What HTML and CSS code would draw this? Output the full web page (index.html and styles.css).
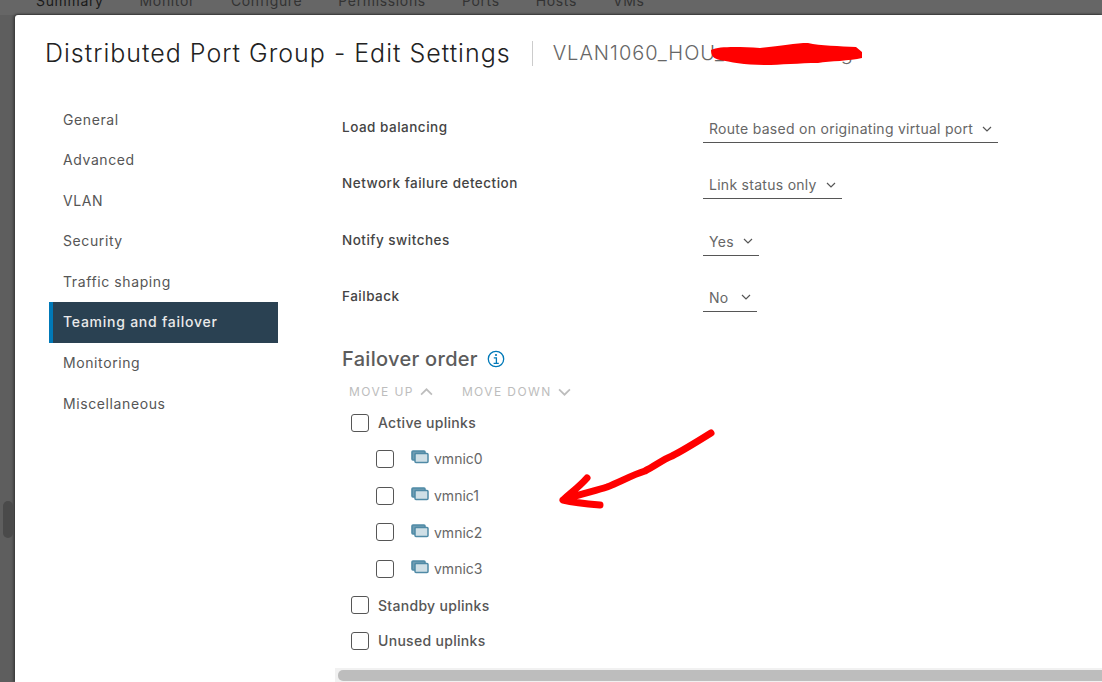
FILE: index.html
```html
<!DOCTYPE html>
<html lang="en">
<head>
<meta charset="utf-8">
<title>Distributed Port Group - Edit Settings</title>
<link rel="stylesheet" href="styles.css">
</head>
<body>
<nav class="tabs">
  <span class="tab tab-current">Summary</span><span class="tab">Monitor</span><span class="tab">Configure</span><span class="tab">Permissions</span><span class="tab">Ports</span><span class="tab">Hosts</span><span class="tab">VMs</span>
</nav>
<div class="backdrop-thumb"></div>
<main class="modal">
  <header class="modal-head">
    <h1 class="modal-title">Distributed Port Group - Edit Settings</h1>
    <span class="modal-sub">VLAN1060_HOU_xxxxxxxxxxg</span>
  </header>
  <div class="modal-body">
    <ul class="side">
      <li>General</li>
      <li>Advanced</li>
      <li>VLAN</li>
      <li>Security</li>
      <li>Traffic shaping</li>
      <li class="active">Teaming and failover</li>
      <li>Monitoring</li>
      <li>Miscellaneous</li>
    </ul>
    <section class="pane">
      <div class="form">
        <div class="row"><label class="lbl">Load balancing</label><span class="select">Route based on originating virtual port<svg class="caret" viewBox="0 0 10 6"><path d="M1 1l4 4 4-4"/></svg></span></div>
        <div class="row"><label class="lbl">Network failure detection</label><span class="select">Link status only<svg class="caret" viewBox="0 0 10 6"><path d="M1 1l4 4 4-4"/></svg></span></div>
        <div class="row"><label class="lbl">Notify switches</label><span class="select">Yes<svg class="caret" viewBox="0 0 10 6"><path d="M1 1l4 4 4-4"/></svg></span></div>
        <div class="row"><label class="lbl">Failback</label><span class="select">No<svg class="caret" viewBox="0 0 10 6"><path d="M1 1l4 4 4-4"/></svg></span></div>
      </div>
      <h2 class="order">Failover order
        <svg class="info" viewBox="0 0 18 18"><circle cx="9" cy="9" r="7.7"/><path d="M6.8 7.8H9.4V13.4M6.6 13.4H11.8"/><circle class="dot" cx="9" cy="5" r="1.1"/></svg>
      </h2>
      <div class="moves">
        <span class="move">MOVE UP<svg viewBox="0 0 12 7"><path d="M1 6l5-5 5 5"/></svg></span>
        <span class="move">MOVE DOWN<svg viewBox="0 0 12 7"><path d="M1 1l5 5 5-5"/></svg></span>
      </div>
      <div class="tree">
        <div class="group"><i class="box"></i>Active uplinks</div>
        <div class="nic"><i class="box"></i><svg class="nic-ico" viewBox="0 0 18 14"><rect class="back" x="1" y="1" width="13" height="9" rx="1"/><rect class="front" x="4" y="3.5" width="13" height="9" rx="1"/></svg>vmnic0</div>
        <div class="nic"><i class="box"></i><svg class="nic-ico" viewBox="0 0 18 14"><rect class="back" x="1" y="1" width="13" height="9" rx="1"/><rect class="front" x="4" y="3.5" width="13" height="9" rx="1"/></svg>vmnic1</div>
        <div class="nic"><i class="box"></i><svg class="nic-ico" viewBox="0 0 18 14"><rect class="back" x="1" y="1" width="13" height="9" rx="1"/><rect class="front" x="4" y="3.5" width="13" height="9" rx="1"/></svg>vmnic2</div>
        <div class="nic"><i class="box"></i><svg class="nic-ico" viewBox="0 0 18 14"><rect class="back" x="1" y="1" width="13" height="9" rx="1"/><rect class="front" x="4" y="3.5" width="13" height="9" rx="1"/></svg>vmnic3</div>
        <div class="group"><i class="box"></i>Standby uplinks</div>
        <div class="group group-last"><i class="box"></i>Unused uplinks</div>
      </div>
      <div class="hscroll"><div class="hthumb"></div></div>
    </section>
  </div>
</main>
<svg class="scribble" viewBox="0 0 1102 682" width="1102" height="682">
  <path class="blob" d="M711 50C720 46 740 47 760 48C780 46 795 43 808 43C820 46 840 46 856 47L862 52L862 58C850 61 830 61 818 63C800 63 780 65 765 65C745 65 730 62 720 60C714 59 711 56 711 50Z"/>
  <path class="red" d="M711 433C695 443 682 451 672 456C662 460 655 466 645 471C632 475 620 482 607 487C595 491 580 494 563 500M587 478C580 486 572 492 563 500C575 503 587 504 600 505"/>
</svg>
</body>
</html>
```
FILE: styles.css
```css
* { box-sizing: border-box; }
html, body { margin: 0; height: 100%; }
body {
  position: relative;
  width: 1102px;
  height: 682px;
  overflow: hidden;
  background: #5e5e5e;
  font-family: Inter, "Open Sans", sans-serif;
  display: flex;
  flex-direction: column;
}
.tabs {
  height: 15px;
  flex: none;
  display: flex;
  background: #666;
  padding-left: 36px;
  gap: 36px;
  font-size: 14px;
  letter-spacing: .65px;
  line-height: 14px;
  overflow: hidden;
}
.tab { margin-top: -6px; color: #333; }
.tab-current { color: #1a1a1a; }
.backdrop-thumb {
  position: absolute;
  left: 3px;
  top: 501px;
  width: 10px;
  height: 37px;
  border-radius: 5px;
  background: #4a4a4a;
}
.modal {
  flex: 1;
  margin-left: 15px;
  min-height: 0;
  background: #fff;
  border-top-left-radius: 3px;
  box-shadow: -2px 0 3px rgba(0,0,0,.3), 0 -1px 2px rgba(0,0,0,.4);
  display: flex;
  flex-direction: column;
}
.modal-head {
  height: 76px;
  flex: none;
  padding: 26px 0 0 30px;
  display: flex;
  align-items: flex-start;
}
.modal-title {
  margin: 0;
  height: 25px;
  padding-right: 21px;
  border-right: 1px solid #ccc;
  font-size: 25px;
  letter-spacing: 1px;
  line-height: 25px;
  font-weight: 300;
  color: #222;
  white-space: nowrap;
}
.modal-sub {
  margin-left: 20px;
  font-size: 20px;
  letter-spacing: 1px;
  line-height: 25px;
  font-weight: 300;
  color: #666;
  white-space: nowrap;
}
.modal-body {
  flex: 1;
  min-height: 0;
  display: flex;
}
.side {
  list-style: none;
  margin: 8.5px 0 0 34px;
  padding: 0;
  width: 229px;
  flex: none;
  font-size: 14px;
  letter-spacing: .6px;
  color: #565656;
}
.side li {
  height: 40.6px;
  line-height: 39px;
  padding-left: 14px;
}
.side li.active {
  background: #2a4152;
  border-left: 4px solid #0079b8;
  padding-left: 10px;
  color: #eaeaea;
  font-weight: 500;
  letter-spacing: .75px;
}
.pane {
  position: relative;
  margin-left: 57px;
  flex: 1;
  padding: 0 0 0 7px;
}
.form { display: flex; flex-direction: column; }
.row {
  height: 56.25px;
  display: flex;
  align-items: flex-start;
}
.row:first-child { margin-top: 24px; }
.lbl {
  width: 361px;
  flex: none;
  font-size: 13.5px;
  letter-spacing: .5px;
  font-weight: 500;
  line-height: 24px;
  color: #444;
}
.select {
  display: inline-flex;
  align-items: center;
  justify-content: space-between;
  min-width: 54px;
  height: 28px;
  padding: 0 6px;
  border-bottom: 1px solid #565656;
  font-size: 14px;
  letter-spacing: .28px;
  color: #666;
  white-space: nowrap;
}
.caret {
  width: 10px;
  height: 6px;
  margin-left: 9px;
  fill: none;
  stroke: #565656;
  stroke-width: 1.2;
}
.order {
  margin: 6.5px 0 0;
  height: 24px;
  display: flex;
  align-items: center;
  font-size: 20px;
  letter-spacing: .3px;
  line-height: 24px;
  font-weight: 500;
  color: #5c5c5c;
}
.info {
  width: 18px;
  height: 18px;
  margin-left: 9px;
  fill: none;
  stroke: #0079b8;
  stroke-width: 1.3;
}
.info .dot { fill: #0079b8; stroke: none; }
.moves {
  display: flex;
  gap: 29px;
  margin: 12px 0 0 7px;
  height: 18px;
  align-items: center;
  font-size: 12px;
  letter-spacing: 1.4px;
  color: #bdbdbd;
}
.move { display: inline-flex; align-items: center; gap: 6px; }
.move svg {
  width: 13px;
  height: 8px;
  fill: none;
  stroke: #bdbdbd;
  stroke-width: 1.6;
}
.tree { margin: 4px 0 0 9px; }
.group, .nic {
  display: flex;
  align-items: center;
  font-size: 14px;
  color: #565656;
}
.group { height: 36px; font-weight: 500; letter-spacing: .3px; }
.group-last { height: 35px; }
.nic { height: 36.7px; padding-left: 25px; color: #666; }
.box {
  width: 18px;
  height: 18px;
  flex: none;
  margin-right: 9px;
  border: 1px solid #565656;
  border-radius: 3px;
}
.nic-ico {
  width: 18px;
  height: 14px;
  flex: none;
  margin: -3px 5px 0 8px;
}
.nic-ico .back { fill: #6f9db3; stroke: #4f8aa6; stroke-width: 1.6; }
.nic-ico .front { fill: #cfdfe6; stroke: #4f8aa6; stroke-width: 1.5; }
.hscroll {
  position: absolute;
  left: 0;
  right: 0;
  bottom: 0;
  height: 14px;
  background: #f1f1f1;
  padding: 2px 0 1px 3px;
}
.hthumb {
  height: 11px;
  border-radius: 5px 0 0 5px;
  background: #bdbdbd;
}
.scribble {
  position: absolute;
  left: 0;
  top: 0;
  pointer-events: none;
}
.blob { fill: #f00; }
.red {
  fill: none;
  stroke: #f00;
  stroke-width: 7;
  stroke-linecap: round;
  stroke-linejoin: round;
}
```
